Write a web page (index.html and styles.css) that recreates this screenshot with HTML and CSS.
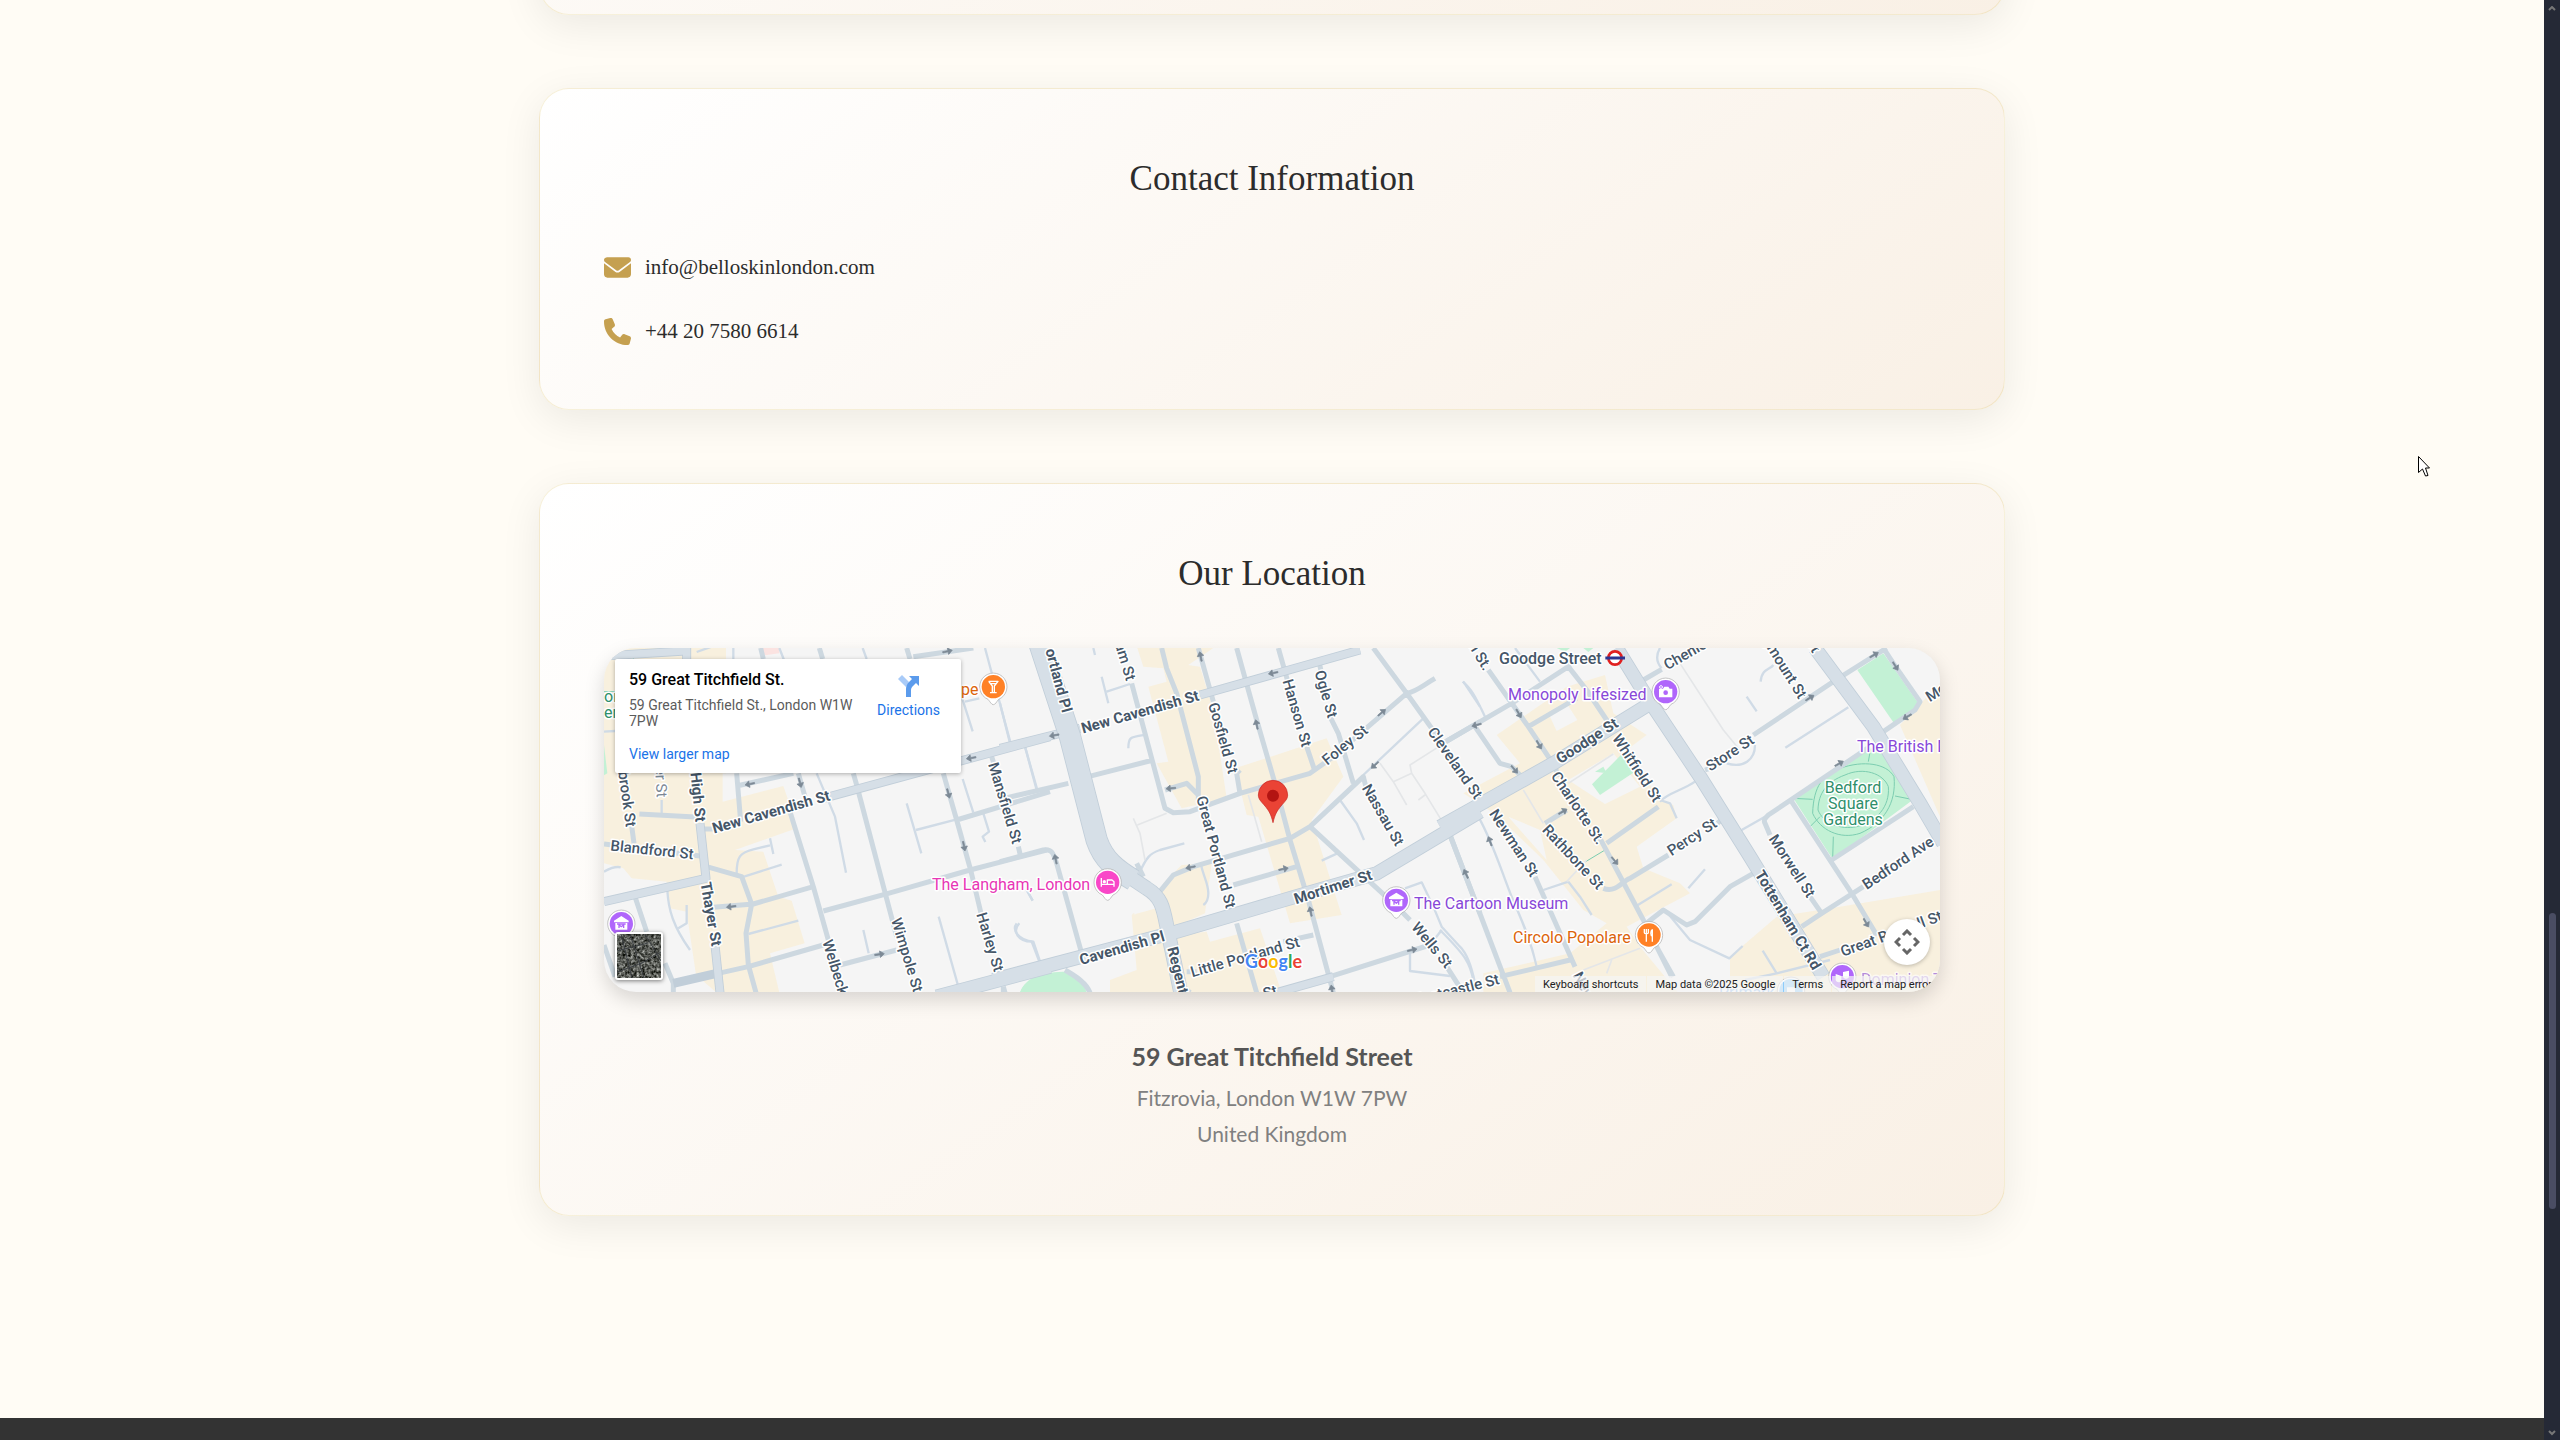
FILE: index.html
```html
<!DOCTYPE html>
<html lang="en">
<head>
<meta charset="utf-8">
<meta name="viewport" content="width=device-width, initial-scale=1">
<title>Contact – Bello Skin London</title>
<link rel="stylesheet" href="styles.css">
</head>
<body>
<div class="page">
  <main class="content">
    <section class="card card-previous" aria-hidden="true"></section>

    <section class="card">
      <h2 class="card-title">Contact Information</h2>
      <ul class="contact-list">
        <li><a class="contact-link" href="mailto:info@belloskinlondon.com">
          <svg class="contact-icon" viewBox="0 0 512 512" aria-hidden="true"><path d="M48 64C21.500 64 0 85.500 0 112c0 15.100 7.100 29.300 19.200 38.400L236.800 313.600c11.400 8.500 27 8.500 38.400 0L492.800 150.400c12.100-9.100 19.200-23.300 19.200-38.400c0-26.500-21.500-48-48-48H48zM0 176V384c0 35.300 28.700 64 64 64H448c35.300 0 64-28.700 64-64V176L294.400 339.200c-22.800 17.100-54 17.100-76.800 0L0 176z"/></svg>
          <span>info@belloskinlondon.com</span></a></li>
        <li><a class="contact-link" href="tel:+442075806614">
          <svg class="contact-icon" viewBox="0 0 512 512" aria-hidden="true"><path d="M164.900 24.600c-7.700-18.600-28-28.500-47.400-23.200l-88 24C12.100 30.200 0 46 0 64C0 311.400 200.600 512 448 512c18 0 33.800-12.100 38.600-29.500l24-88c5.300-19.400-4.600-39.700-23.200-47.400l-96-40c-16.300-6.800-35.200-2.100-46.300 11.600L304.700 368C234.300 334.700 177.300 277.700 144 207.300L193.300 167c13.700-11.200 18.400-30 11.600-46.300l-40-96z"/></svg>
          <span>+44 20 7580 6614</span></a></li>
      </ul>
    </section>

    <section class="card">
      <h2 class="card-title">Our Location</h2>
      <div class="map">
        <svg class="map-layer" viewBox="0 0 4008 1032" preserveAspectRatio="xMidYMid slice" aria-hidden="true">
          <defs>
            <path id="arrow" d="M-14-2H2V-10L15 0L2 10V2H-14Z"/>
            <g id="pin"><path class="pin-edge" d="M0 54C-6 54-9 46-16 38A41 41 0 1 1 16 38C9 46 6 54 0 54Z"/><circle r="35"/></g>
          </defs>
          <!-- commercial areas -->
          <g class="sand">
            <g transform="translate(-42 -54)">
              <path d="M42 54H408V430H398V515L580 468L612 560L620 595L435 660L520 665L565 800L605 812L644 940L540 970L568 1088H380L318 1035L290 845L240 835L230 755L125 745L100 715L42 700Z"/>
            </g>
            <g transform="translate(1188 -54)">
              <path d="M412 54H640L565 105L600 110L640 240L680 505L545 535L470 400L505 395L445 170L500 155L490 115L430 110Z"/>
              <path d="M705 415L980 325L1030 440L935 570L1025 855L870 880L775 560L740 555Z"/>
              <path d="M490 760L545 705L635 700L615 850L525 890L400 850L395 855L470 835ZM330 1088V1050L410 1020L395 855L480 840L530 915L620 905L630 935L780 895L845 1088Z"/>
            </g>
            <g transform="translate(2508 -54)">
              <path d="M380 170L495 135L520 250L620 315L560 360L660 510L700 525L710 565L590 650L610 715L720 760L750 790L560 890L600 950L715 1088H130V1030L390 970L500 880L430 840L310 690L170 555L70 490L240 400L170 315Z"/>
              <path d="M870 980L1010 860L1200 830L1500 780V1088H870ZM1380 285L1500 160V560Z"/>
            </g>
          </g>
          <g class="land" transform="translate(2508 -54)"><path d="M325 250L380 220L412 270L350 303ZM385 450L520 370L600 470L495 522ZM205 560L320 690L300 600Z"/></g>
          <g class="pink" transform="translate(-42 -54)"><path d="M510 54H568V70L525 76Z"/></g>
          <!-- parks -->
          <g class="park">
            <path transform="translate(-42 -54)" d="M42 345L52 430L42 436ZM1290 1088C1305 1050 1340 1040 1400 1030V1088Z"/>
            <path transform="translate(1188 -54)" d="M60 1088C75 1040 130 1025 200 1025C240 1040 255 1070 260 1088Z"/>
            <path transform="translate(2508 -54)" d="M1252 120L1330 70L1432 215L1425 240L1362 280ZM1060 505L1290 355L1325 365L1418 510L1178 688ZM456 463L545 373L580 428L480 495ZM465 425L490 410L500 430ZM350 54H390L375 65ZM430 54H460L445 66Z"/>
          </g>
          <g class="park-path">
            <path transform="translate(2508 -54)" d="M1200 415C1270 390 1340 400 1362 440C1370 520 1330 580 1260 610C1200 630 1140 600 1118 550C1120 470 1150 430 1200 415ZM1215 435C1270 410 1330 430 1345 470C1350 530 1310 575 1250 590C1200 600 1150 580 1134 540C1135 490 1160 455 1215 435ZM1060 505L1118 508M1415 508L1365 498M1178 688L1180 620M1285 395L1292 355M1110 590L1140 560M437 695L495 660"/>
            <path transform="translate(-42 -54)" d="M130 70V120M42 185H90"/>
          </g>
          <!-- lanes -->
          <g class="lane">
            <path transform="translate(-42 -54)" d="M42 305L75 303M320 66L365 50M430 54V87M568 54L582 90M818 54L830 87M215 510V550M680 430L735 560L768 728M950 520L994 670M978 600L1100 568M1118 447L1150 548M1180 550L1197 605L1178 620L1186 636M1185 54L1262 340M1305 350L1340 480M1112 190L1148 304M1125 215L1168 205M440 730C440 680 450 668 490 658L540 646M540 625L550 672M455 742L575 704M475 912L625 872M42 725C60 715 75 708 92 712M232 780C235 840 250 890 300 960M290 825V880L265 895M1046 860L1105 1070M820 900L836 970M1288 880C1265 905 1285 935 1325 935L1350 1000M1310 780L1328 812"/>
            <path transform="translate(1188 -54)" d="M280 54L285 75M305 140L325 220M320 185L390 162M75 350L112 480M385 355C385 320 390 322 440 314M0 220L30 340M415 735C440 680 450 670 480 660L553 640M400 720L420 715M602 700C610 740 625 760 625 790C625 810 618 820 610 825M965 692L1012 670M1020 510L1070 580L1092 630M1090 435L1270 265M1390 155L1440 230M50 880C35 900 55 930 100 935L122 1000M1215 775L1265 757L1300 830L1325 890L1380 950C1400 970 1415 1010 1425 1060M1230 970V1023L1350 1038M1325 900L1290 945M80 780L98 812"/>
            <path transform="translate(2508 -54)" d="M68 155C100 180 115 220 135 260M225 54L300 155M660 54C645 80 652 100 665 115M660 515C680 490 730 480 765 455M660 510L690 520L710 565M920 200L950 244M962 155C965 115 990 120 1000 105M1036 353L1225 232M860 400C910 415 945 390 945 345M905 600L975 560M585 830L695 763M795 718L745 775M310 780L385 755M385 755L420 800L455 855M115 560C160 640 190 740 215 800S270 920 290 1010M0 900C80 980 90 1000 100 1050M675 840L750 930L868 985L908 948M968 962L1010 1030M915 1050L1010 1030L1170 990M1290 915L1310 915"/>
          </g>
          <g class="track">
            <path transform="translate(1188 -54)" d="M745 495L785 635M400 565L420 610L435 690M412 585L500 550M1140 400L1180 455L1220 525M1180 455L1235 430L1230 405L1340 335M1235 430L1275 490L1330 580M1275 495L1255 510"/>
            <path transform="translate(2508 -54)" d="M720 100L850 300L895 355M520 372L385 460M250 480L310 580M380 755L440 690M430 1020L600 955M515 990L500 1030"/>
          </g>
          <!-- side streets -->
          <g class="street">
            <path transform="translate(-42 -54)" d="M512 54L520 87M688 54L698 87M950 54L960 87M970 80L1150 54M42 642L330 678M120 550L132 640M148 552L330 562M440 430L452 575M440 468L610 430M625 430L645 500M340 597H380M350 710L455 740L485 822L468 910L475 1005L498 1088M370 832L490 822L670 770M250 1060L475 1010L700 945M600 545L670 770L715 930M790 430L800 465L920 920M700 843L895 790L1140 720L1370 660M1060 430L1100 570L1142 720L1185 900M1100 570L1380 485M1205 380L1215 410M1285 650L1292 680M135 800L170 905M225 1000L250 1060V1088M42 945L75 1040M750 1005L920 960M1240 1070L1245 1088"/>
            <path transform="translate(1188 -54)" d="M0 508L205 460M0 695L130 660C155 655 160 670 170 700L245 970M395 160L435 310L495 535L520 548L570 545L720 490L930 430L1000 380L1220 190M265 440L460 390M495 480L560 460L595 495M485 54L500 115L530 190L595 440V510M595 54L640 215M710 54L770 270L825 460L870 630L925 810L1000 1088M720 420L710 430L720 490M835 54L865 160M920 350L942 415M958 100L965 130M990 260L1015 310L1060 460M1120 54L1220 190L1320 330M1220 190C1250 185 1270 165 1305 145M1320 345L1440 275M930 590L1090 440L1100 480M475 790L520 735L580 710L870 625L930 590L1180 820L1230 870M700 765L890 710M710 880L770 1088M850 935L940 915M990 1040L1290 945M1350 615L1440 850M1340 1010L1390 1088M560 1025H590M550 1070L570 1088M410 700L430 740M690 830L700 850M10 1070V1088M195 1020C230 1040 260 1060 270 1088"/>
            <path transform="translate(2508 -54)" d="M145 120L265 290L345 410M0 345L215 220L385 110L440 180L520 300M370 90L390 115M105 290L180 400L215 410L240 435M265 290L410 205M610 150L665 118M500 640L655 530M345 410L355 440M480 625L610 870L695 1040M315 580L380 540M490 775C530 790 550 750 570 745L685 675M832 580L845 570M600 895L670 840L740 885L765 875L870 770L940 730M30 615L210 1088M150 550L165 560M285 740L405 1010M180 1040L390 990M655 960L700 1040M795 420L810 415M940 315L1180 155L1340 54M1330 54L1360 100L1440 215L1425 240L1330 305M1180 160L1210 140M975 580C970 570 975 565 985 555L1290 350M1055 515L1235 790L1310 915M1175 690L1420 530M975 580L990 615M1110 800L1145 850M1085 890L1145 850L1270 770M1140 980L1200 960M1480 630L1500 620"/>
          </g>
          <!-- main roads -->
          <g class="main-edge">
            <path transform="translate(-42 -54)" d="M42 78L300 62M290 54V90M330 580L348 745L42 815M375 945L390 1088M250 1060L380 1030M700 505L1380 320" />
            <path transform="translate(1188 -54)" d="M0 355L240 295M600 195L1080 60M830 1088L1000 1040"/>
          </g>
          <g class="avenue-edge">
            <path transform="translate(-42 -54)" d="M1040 1100L1380 1010"/>
            <path transform="translate(1188 -54)" d="M-20 1050L530 905L920 790L1130 730L1440 545"/>
            <path transform="translate(2508 -54)" d="M0 590L340 400L640 215M530 54L620 200L780 440L930 680L1150 1040M1125 54L1300 290L1440 520L1510 640"/>
          </g>
          <g class="main">
            <path transform="translate(-42 -54)" d="M42 78L300 62M290 54V90M330 580L348 745L42 815M375 945L390 1088M700 505L1380 320" />
            <path transform="translate(1188 -54)" d="M0 355L240 295M600 195L1080 60M830 1088L1000 1040"/>
          </g>
          <path class="place-edge" transform="translate(1188 -54)" d="M115 30L210 320L290 630C310 690 350 720 400 750"/>
          <path class="regent-edge" transform="translate(1188 -54)" d="M380 735L440 775C490 805 490 840 505 910L545 1100"/>
          <path class="place" transform="translate(1188 -54)" d="M115 30L210 320L290 630C310 690 350 720 400 750"/>
          <path class="regent" transform="translate(1188 -54)" d="M380 735L440 775C490 805 490 840 505 910L545 1100"/>
          <g class="avenue">
            <path transform="translate(-42 -54)" d="M1040 1100L1380 1010"/>
            <path transform="translate(1188 -54)" d="M-20 1050L530 905L920 790L1130 730L1440 545"/>
            <path transform="translate(2508 -54)" d="M0 590L340 400L640 215M530 54L620 200L780 440L930 680L1150 1040M1125 54L1300 290L1440 520L1510 640"/>
          </g>
          <!-- one-way arrows -->
          <g class="arrows">
            <g transform="translate(-42 -54)">
              <use href="#arrow" transform="translate(1072 64) rotate(-12)"/><use href="#arrow" transform="translate(1144 384) rotate(170)"/><use href="#arrow" transform="translate(480 462) rotate(168)"/><use href="#arrow" transform="translate(630 458) rotate(75)"/><use href="#arrow" transform="translate(1075 490) rotate(75)"/><use href="#arrow" transform="translate(1122 648) rotate(78)"/><use href="#arrow" transform="translate(424 830) rotate(172)"/><use href="#arrow" transform="translate(868 973) rotate(-8)"/>
            </g>
            <g transform="translate(1188 -54)">
              <use href="#arrow" transform="translate(602 80) rotate(-102)"/><use href="#arrow" transform="translate(820 129) rotate(168)"/><use href="#arrow" transform="translate(163 316) rotate(170)"/><use href="#arrow" transform="translate(770 284) rotate(-102)"/><use href="#arrow" transform="translate(1145 248) rotate(-40)"/><use href="#arrow" transform="translate(1125 405) rotate(138)"/><use href="#arrow" transform="translate(513 475) rotate(175)"/><use href="#arrow" transform="translate(167 688) rotate(-102)"/><use href="#arrow" transform="translate(572 712) rotate(168)"/><use href="#arrow" transform="translate(850 717) rotate(-12)"/><use href="#arrow" transform="translate(932 845) rotate(-102)"/><use href="#arrow" transform="translate(1236 960) rotate(-12)"/><use href="#arrow" transform="translate(996 1080) rotate(-100)"/>
            </g>
            <g transform="translate(2508 -54)">
              <use href="#arrow" transform="translate(110 285) rotate(165)"/><use href="#arrow" transform="translate(236 250) rotate(60)"/><use href="#arrow" transform="translate(297 344) rotate(60)"/><use href="#arrow" transform="translate(223 418) rotate(50)"/><use href="#arrow" transform="translate(368 545) rotate(-30)"/><use href="#arrow" transform="translate(524 692) rotate(50)"/><use href="#arrow" transform="translate(150 634) rotate(-110)"/><use href="#arrow" transform="translate(78 732) rotate(-115)"/><use href="#arrow" transform="translate(1109 204) rotate(-32)"/><use href="#arrow" transform="translate(1302 75) rotate(-30)"/><use href="#arrow" transform="translate(1366 108) rotate(58)"/><use href="#arrow" transform="translate(1402 260) rotate(150)"/><use href="#arrow" transform="translate(1197 401) rotate(-30)"/><use href="#arrow" transform="translate(1278 878) rotate(60)"/>
            </g>
          </g>
          <!-- place markers -->
          <g transform="translate(-42 -54)">
            <g class="food" transform="translate(1210 170)"><use href="#pin"/><path class="glyph-line" d="M-14-16H14L3-2V17M-14-16L-3-2V17M-10 18H10M-9-9H9"/></g>
            <g class="culture" transform="translate(94 881)"><use href="#pin"/><path class="glyph" d="M0-23L22-9V-4H-22V-9ZM-18-2H18V18H-18Z"/><path class="glyph-ink" d="M-7 13V3L0 9L7 3V13M-13 1H13"/></g>
          </g>
          <g transform="translate(1188 -54)">
            <g class="hotel" transform="translate(323 757)"><use href="#pin"/><path class="glyph-line" d="M-19-13V13M-19 6H19V13M19 6V-2L13-7H-1V6"/><circle class="glyph" cx="-10" cy="-2" r="5"/></g>
            <g class="culture" transform="translate(1189 811)"><use href="#pin"/><path class="glyph" d="M0-23L22-9V-4H-22V-9ZM-18-2H18V18H-18Z"/><path class="glyph-ink" d="M-7 13V3L0 9L7 3V13M-13 1H13"/></g>
            <g transform="translate(819 497)"><path class="main-pin" d="M0 81C-6 55-12 46-24 31C-36 17-44 10-44-2A44 44 0 1 1 44-2C44 10 36 17 24 31C12 46 6 55 0 81Z"/><circle class="main-pin-dot" r="18"/></g>
          </g>
          <g transform="translate(2508 -54)">
            <g class="culture" transform="translate(677 185)"><use href="#pin"/><path class="glyph" d="M-20-9H-8L-4-15H8L12-9H20V17H-20Z"/><circle class="culture-dot" cy="3" r="7"/><path class="glyph" d="M-16-20V-8H-12V-20ZM-20-16H-8V-12H-20Z"/></g>
            <g class="food" transform="translate(627 915)"><use href="#pin"/><path class="glyph-line" d="M-8-4V20M-14-18V-7C-14-3-2-3-2-7V-18M-8-18V-4M10-17V20M10-16C4-12 4 2 10 4"/></g>
            <g class="culture" transform="translate(1207 1040)"><use href="#pin"/><path class="glyph" d="M-20-8L-3-2V12C-8 19-17 18-20 10ZM2-14L20-18V0C17 8 6 9 2 0Z"/></g>
            <g class="shop" transform="translate(1053 1082)"><use href="#pin"/><path class="glyph" d="M-12-10H12V14H-12Z"/></g>
            <circle class="tube-ring" cx="525" cy="84" r="20"/><path class="tube-bar" d="M496 84H555"/>
          </g>
        </svg>

        <svg class="map-layer map-labels" viewBox="0 0 1336 344" preserveAspectRatio="xMidYMid slice" role="img" aria-label="Map around 59 Great Titchfield Street">
          <g class="road-label">
            <text class="major" transform="translate(167 164) rotate(-16)" dy="5">New Cavendish St</text>
            <text transform="translate(48 202) rotate(6)" dy="5">Blandford St</text>
            <text transform="translate(23 151) rotate(82)" dy="5">brook St</text>
            <text class="quiet" transform="translate(57 134) rotate(87)" dy="5">er St</text>
            <text class="major" transform="translate(94 149) rotate(84)" dy="5">High St</text>
            <text class="major" transform="translate(107 266) rotate(80)" dy="5">Thayer St</text>
            <text transform="translate(401 155) rotate(73)" dy="5">Mansfield St</text>
            <text transform="translate(386 294) rotate(73)" dy="5">Harley St</text>
            <text transform="translate(303 307) rotate(73)" dy="5">Wimpole St</text>
            <text class="from" transform="translate(223 292) rotate(73)" dy="5">Welbeck St</text>
            <text class="to major" transform="translate(463 64) rotate(75)" dy="5">Portland Pl</text>
            <text class="to" transform="translate(527 32) rotate(73)" dy="5">Hallam St</text>
            <text class="major" transform="translate(536 64) rotate(-16)" dy="5">New Cavendish St</text>
            <text transform="translate(619 90) rotate(74)" dy="5">Gosfield St</text>
            <text transform="translate(693 65) rotate(74)" dy="5">Hanson St</text>
            <text transform="translate(722 46) rotate(74)" dy="5">Ogle St</text>
            <text transform="translate(741 97) rotate(-39)" dy="5">Foley St</text>
            <text transform="translate(612 204) rotate(75)" dy="5">Great Portland St</text>
            <text class="major" transform="translate(729 239) rotate(-18)" dy="5">Mortimer St</text>
            <text class="major" transform="translate(518 300) rotate(-16)" dy="5">Cavendish Pl</text>
            <text class="from major" transform="translate(568 299) rotate(76)" dy="5">Regent St</text>
            <text transform="translate(641 309) rotate(-16)" dy="5">Little Portland St</text>
            <text transform="translate(666 344) rotate(-15)" dy="5">St</text>
            <text transform="translate(851 115) rotate(55)" dy="5">Cleveland St</text>
            <text transform="translate(779 167) rotate(60)" dy="5">Nassau St</text>
            <text transform="translate(828 297) rotate(50)" dy="5">Wells St</text>
            <text class="to" transform="translate(895 331) rotate(-14)" dy="5">Eastcastle St</text>
            <text class="to" transform="translate(884 21) rotate(59)" dy="5">Tottenham St.</text>
            <text class="major" transform="translate(983 93) rotate(-33)" dy="5">Goodge St</text>
            <text transform="translate(1033 120) rotate(57)" dy="5">Whitfield St</text>
            <text transform="translate(974 160) rotate(56)" dy="5">Charlotte St.</text>
            <text transform="translate(969 209) rotate(47)" dy="5">Rathbone St</text>
            <text transform="translate(910 195) rotate(57)" dy="5">Newman St</text>
            <text class="from" transform="translate(973 325) rotate(63)" dy="5">Newman St</text>
            <text transform="translate(1088 189) rotate(-33)" dy="5">Percy St</text>
            <text transform="translate(1126 105) rotate(-33)" dy="5">Store St</text>
            <text class="from" transform="translate(1061 18) rotate(-30)" dy="5">Chenies St</text>
            <text class="to" transform="translate(1199 49) rotate(58)" dy="5">Ridgmount St</text>
            <text class="to" transform="translate(1213 3) rotate(58)" dy="5">Gower St</text>
            <text class="from" transform="translate(1323 50) rotate(-32)" dy="5">Montague Pl</text>
            <text transform="translate(1188 218) rotate(57)" dy="5">Morwell St</text>
            <text transform="translate(1294 215) rotate(-34)" dy="5">Bedford Ave</text>
            <text class="major" transform="translate(1184 272) rotate(59)" dy="5">Tottenham Ct Rd</text>
            <text class="from" transform="translate(1237 304) rotate(-20)" dy="5">Great Russell St</text>
          </g>
          <g class="poi-label">
            <text x="895" y="16" class="station">Goodge Street</text>
            <text x="904" y="52">Monopoly Lifesized</text>
            <text x="810" y="261">The Cartoon Museum</text>
            <text x="1253" y="104">The British Museum</text>
            <text x="1257" y="337" class="faded">Dominion Theatre</text>
            <text x="328" y="242" class="pink-label">The Langham, London</text>
            <text x="909" y="295" class="food-label">Circolo Popolare</text>
            <text x="357" y="47" class="food-label">pe</text>
            <text x="1115" y="350" class="shop-label">Primark</text>
            <g class="park-label">
              <text x="0" y="54">on</text><text x="0" y="70">er</text>
              <text class="mid" x="1249" y="145">Bedford</text><text class="mid" x="1249" y="161">Square</text><text class="mid" x="1249" y="177">Gardens</text>
            </g>
          </g>
          <text class="google" x="641" y="320"><tspan fill="#4285f4">G</tspan><tspan fill="#ea4335">o</tspan><tspan fill="#fbbc04">o</tspan><tspan fill="#4285f4">g</tspan><tspan fill="#34a853">l</tspan><tspan fill="#ea4335">e</tspan></text>
        </svg>

        <div class="place-card">
          <div class="place-info">
            <div class="place-name">59 Great Titchfield St.</div>
            <div class="place-address">59 Great Titchfield St., London W1W 7PW</div>
            <a class="map-link" href="#map">View larger map</a>
          </div>
          <a class="directions" href="#directions">
            <svg class="directions-icon" viewBox="0 0 22 22" aria-hidden="true"><path d="M0 4L4 0L11 7L8 12Z" fill="#a9cbf8"/><path d="M8 22V14C8 11 9 9 11 7L14 4L11 1H21V11L18 8L15 11C14 12 13 13 13 15V22Z" fill="#5b9bec"/></svg>
            <span>Directions</span>
          </a>
        </div>

        <button class="satellite" type="button" aria-label="Show satellite imagery">
          <svg class="satellite-image" viewBox="0 0 44 44" aria-hidden="true">
            <filter id="roofs" x="0" y="0" width="100%" height="100%" color-interpolation-filters="sRGB"><feTurbulence type="fractalNoise" baseFrequency="0.35" numOctaves="4" seed="8"/><feColorMatrix values="1 0.3 0 0 -0.3 1 0.3 0 0 -0.29 1 0.3 0 0 -0.31 0 0 0 0 1"/></filter>
            <rect width="44" height="44" filter="url(#roofs)"/>
            <path d="M13 0L27 44M4 0L15 44M0 17L31 9M0 38L25 29L44 18M28 0L44 27" fill="none" stroke="#3a3e42"/>
          </svg>
        </button>

        <button class="camera" type="button" aria-label="Map camera controls">
          <svg class="camera-icon" viewBox="0 0 26 26" aria-hidden="true"><path d="M9 6L13 2L17 6M9 20L13 24L17 20M6 9L2 13L6 17M20 9L24 13L20 17"/></svg>
        </button>

        <div class="attribution">
          <button class="attribution-item" type="button">Keyboard shortcuts</button>
          <span class="attribution-item">Map data ©2025 Google</span>
          <a class="attribution-item" href="#terms">Terms</a>
          <a class="attribution-item" href="#report">Report a map error</a>
        </div>
      </div>
      <address class="address">
        <strong class="address-street">59 Great Titchfield Street</strong>
        <span>Fitzrovia, London W1W 7PW</span>
        <span>United Kingdom</span>
      </address>
    </section>
  </main>
  <footer class="footer"></footer>
</div>

<div class="scrollbar" aria-hidden="true">
  <svg class="scroll-arrow" viewBox="0 0 8 6"><path d="M1 4L4 1L7 4"/></svg>
  <div class="scroll-track"><div class="scroll-thumb"></div></div>
  <svg class="scroll-arrow" viewBox="0 0 8 6"><path d="M1 1L4 4L7 1"/></svg>
</div>

<svg class="cursor" viewBox="0 0 12 21" aria-hidden="true"><path d="M.5.500V16.500L4.500 13L7.500 20L10 19.500L7.500 12H11.500Z"/></svg>
</body>
</html>
```

FILE: styles.css
```css
* { box-sizing: border-box; }

body {
  margin: 0;
  display: flex;
  min-height: 100vh;
  background: #fffcf5;
  color: #2c2c2c;
  font-family: Lato, sans-serif;
}

.page {
  flex: 1;
  min-width: 0;
  display: flex;
  flex-direction: column;
  overflow: hidden;
}

.content {
  flex: 1;
  width: 100%;
  max-width: 1466px;
  margin: 0 auto;
  padding-bottom: 202px;
  display: flex;
  flex-direction: column;
  gap: 73px;
}

.card {
  padding: 64px 64px 63px;
  border: 1px solid rgba(212, 175, 55, 0.18);
  border-radius: 30px;
  background: linear-gradient(145deg, #ffffff, #f9f0e5);
  box-shadow: 0 10px 40px rgba(0, 0, 0, 0.08);
}

/* the tail of the section above, scrolled out of view */
.card-previous {
  height: 600px;
  margin-top: -585px;
}

.card-title {
  margin: 0 0 48px;
  font: 400 35px/52px "Liberation Serif", serif;
  text-align: center;
}

.contact-list {
  margin: 0;
  padding: 0;
  list-style: none;
  display: grid;
  gap: 35px;
}

.contact-link {
  display: inline-flex;
  align-items: center;
  gap: 14px;
  color: inherit;
  font: 400 21px/29px "Liberation Serif", serif;
  text-decoration: none;
  vertical-align: top;
}

.contact-icon { width: 27px; height: 27px; fill: #c5a050; }

.map {
  position: relative;
  height: 344px;
  overflow: hidden;
  border-radius: 32px;
  background: #f5f5f5;
  box-shadow: 0 8px 20px rgba(0, 0, 0, 0.15);
  font-family: Roboto, sans-serif;
}

.map-layer { position: absolute; inset: 0; width: 100%; height: 100%; }
.map-layer path { stroke-linejoin: round; }

.sand { fill: #f8f0de; }
.land { fill: #f5f5f5; }
.pink { fill: #fbe3e1; }
.park { fill: #c3f1d5; }
.park-path { fill: none; stroke: #7ccdb0; stroke-width: 3; }
.lane { fill: none; stroke: #d0dbe6; stroke-width: 7; }
.track { fill: none; stroke: #e4e6e8; stroke-width: 5; }
.street { fill: none; stroke: #cdd8e0; stroke-width: 15; }
.main-edge { fill: none; stroke: #c1ced9; stroke-width: 27; }
.main { fill: none; stroke: #d6dfe7; stroke-width: 22; }
.avenue-edge { fill: none; stroke: #c1ced9; stroke-width: 43; }
.avenue { fill: none; stroke: #d6dfe7; stroke-width: 38; }
.place-edge { fill: none; stroke: #c1ced9; stroke-width: 67; }
.place { fill: none; stroke: #d6dfe7; stroke-width: 62; }
.regent-edge { fill: none; stroke: #c1ced9; stroke-width: 45; }
.regent { fill: none; stroke: #d6dfe7; stroke-width: 40; }
.arrows { fill: #7c8995; stroke: #7c8995; stroke-width: 2; }

.pin-edge { fill: #ffffff; stroke: #a9a9a9; stroke-width: 2; }
.food { fill: #ff8126; }
.culture { fill: #b066fb; }
.hotel { fill: #f947c8; }
.shop { fill: #8dccfb; }
.glyph { fill: #ffffff; }
.glyph-line { fill: none; stroke: #ffffff; stroke-width: 4; }
.glyph-ink { fill: none; stroke: #b066fb; stroke-width: 4; }
.culture-dot { fill: #b066fb; }
.main-pin { fill: #ea4335; stroke: #c5221f; stroke-width: 2; }
.main-pin-dot { fill: #b31412; }
.tube-ring { fill: #ffffff; stroke: #e02020; stroke-width: 8; }
.tube-bar { stroke: #2b3590; stroke-width: 9; }

.map-labels text {
  paint-order: stroke;
  stroke: #ffffff;
  stroke-width: 3px;
  stroke-linejoin: round;
}
.road-label { font-size: 15px; font-weight: 500; fill: #455668; text-anchor: middle; }
.road-label .from { text-anchor: start; }
.road-label .to { text-anchor: end; }
.road-label .major { font-weight: 700; }
.road-label .quiet { fill: #7b8794; font-weight: 400; }
.poi-label { font-size: 16px; fill: #8848d8; }
.station { fill: #455668; font-weight: 500; }
.faded { opacity: 0.6; }
.pink-label { fill: #e835b5; }
.food-label { fill: #dc640b; }
.shop-label { fill: #8dbcf0; }
.park-label { fill: #2f8f6b; }
.mid { text-anchor: middle; }
.google { font: 700 18px Lato, sans-serif; }

.place-card {
  position: absolute;
  top: 11px;
  left: 11px;
  display: flex;
  justify-content: space-between;
  width: 346px;
  height: 114px;
  padding: 11px 21px 11px 14px;
  border-radius: 2px;
  background: #ffffff;
  box-shadow: 0 1px 4px rgba(0, 0, 0, 0.3);
  font-size: 14px;
  line-height: 16px;
}

.place-info { display: flex; flex-direction: column; width: 226px; }
.place-name { color: #000000; font-size: 16px; font-weight: 500; line-height: 20px; }
.place-address { margin-top: 7px; color: #5b5b5b; }
.map-link, .directions { color: #1a73e8; text-decoration: none; }
.map-link { margin-top: 17px; }

.directions {
  display: flex;
  flex-direction: column;
  align-items: center;
  gap: 5px;
  padding-top: 5px;
}
.directions-icon { width: 22px; height: 22px; }

.satellite {
  position: absolute;
  left: 11px;
  bottom: 12px;
  width: 48px;
  height: 48px;
  padding: 0;
  border: 2px solid #ffffff;
  border-radius: 3px;
  background: #4d5052;
  box-shadow: 0 1px 4px rgba(0, 0, 0, 0.5);
}
.satellite-image { display: block; width: 44px; height: 44px; }

.camera {
  position: absolute;
  right: 10px;
  bottom: 27px;
  width: 46px;
  height: 46px;
  padding: 10px;
  border: 0;
  border-radius: 50%;
  background: #ffffff;
  box-shadow: 0 1px 4px rgba(0, 0, 0, 0.25);
}
.camera-icon { display: block; width: 26px; height: 26px; fill: none; stroke: #666666; stroke-width: 3; }

.attribution {
  position: absolute;
  right: 0;
  bottom: 0;
  display: flex;
  gap: 1px;
  font-size: 11px;
  line-height: 14px;
}
.attribution-item {
  padding: 2px 8px 0;
  border: 0;
  background: rgba(245, 245, 245, 0.7);
  color: #202020;
  font: inherit;
  text-decoration: none;
}

.address {
  margin-top: 42px;
  display: grid;
  justify-items: center;
  color: #808080;
  font-size: 21px;
  font-style: normal;
  line-height: 36px;
}
.address-street { padding-bottom: 2px; color: #555555; font-size: 25px; line-height: 44px; }

.footer { height: 22px; background: #333333; }

.scrollbar {
  flex: none;
  width: 16px;
  display: flex;
  flex-direction: column;
  align-items: center;
  padding: 6px 0 4px;
  background: #252936;
}
.scroll-arrow { width: 8px; height: 6px; fill: none; stroke: #777777; stroke-width: 2; }
.scroll-track { flex: 1; display: flex; flex-direction: column; }
.scroll-track::before { content: ""; flex: 901; }
.scroll-track::after { content: ""; flex: 221; }
.scroll-thumb { flex: 296; width: 7px; border-radius: 4px; background: #4a4d63; }

.cursor {
  position: fixed;
  left: 2418px;
  top: 456px;
  width: 12px;
  height: 21px;
  fill: #ffffff;
  stroke: #000000;
}
```
